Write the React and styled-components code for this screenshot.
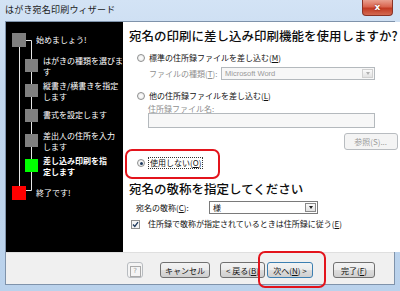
import React from 'react'
import styled, { createGlobalStyle, css } from 'styled-components'

const Global = createGlobalStyle`
  html, body { margin: 0; padding: 0; }
  body {
    width: 400px;
    height: 291px;
    overflow: hidden;
    font-family: "Noto Sans CJK JP", "Noto Sans", sans-serif;
  }
`

const Window = styled.div`
  width: 400px;
  height: 291px;
  box-sizing: border-box;
  padding: 0 5px 6px;
  display: flex;
  flex-direction: column;
  background: linear-gradient(180deg, #d3e3f5 0%, #c2d7ee 30%, #bad2ec 100%);
`

const TitleBar = styled.div`
  height: 21px;
  display: flex;
  justify-content: space-between;
  align-items: flex-start;
`

const Title = styled.div`
  font-size: 9px;
  line-height: 20px;
  color: #1b1b1b;
  letter-spacing: 0.2px;
`

const CloseButton = styled.div`
  width: 31px;
  height: 16px;
  margin-right: 2px;
  box-sizing: border-box;
  border: 1px solid #8a3326;
  border-top: none;
  border-radius: 0 0 4px 4px;
  background: linear-gradient(180deg, #e9a08f 0%, #d9654f 45%, #c23a22 55%, #d36a52 100%);
  color: #fff;
  font-family: "DejaVu Sans", sans-serif;
  font-weight: bold;
  font-size: 9px;
  line-height: 15px;
  text-align: center;
  text-shadow: 0 0 2px #6b1a0e;
`

const Client = styled.div`
  flex: 1;
  display: flex;
  flex-direction: column;
  border: 1px solid #7f93ab;
  background: #f0f0f0;
`

const Main = styled.div`
  height: 230px;
  display: flex;
`

const Sidebar = styled.div`
  position: relative;
  width: 119px;
  background: #000;
  box-sizing: border-box;
  padding-top: 11px;
  display: flex;
  flex-direction: column;
  gap: 11px;
`

const Tree = styled.svg`
  position: absolute;
  left: 0;
  top: 0;
  pointer-events: none;
`

const StepRow = styled.div`
  position: relative;
  height: 14px;
  display: flex;
  align-items: center;
  margin-top: ${p => p.$push || 0}px;
`

const Square = styled.div`
  flex: none;
  width: ${p => (p.$sub ? 13 : 14)}px;
  height: ${p => (p.$sub ? 13 : 14)}px;
  margin-left: ${p => (p.$sub ? 19 : 6)}px;
  background: ${p => p.$color};
`

const StepLabel = styled.div`
  margin-left: ${p => (p.$sub ? 5 : 10)}px;
  margin-top: ${p => (p.$two ? 3 : 0)}px;
  color: #fff;
  font-size: 8px;
  line-height: 10.5px;
  white-space: nowrap;
  font-weight: ${p => (p.$active ? 700 : 400)};
`

const Content = styled.div`
  flex: 1;
  background: #fff;
  padding: 6px 17px 0 6px;
  display: flex;
  flex-direction: column;
  font-size: 8px;
  color: #111;
`

const Heading = styled.div`
  font-size: 12.5px;
  line-height: 15px;
  font-weight: 500;
  color: #0d0d0d;
  white-space: nowrap;
  margin-top: ${p => p.$top || 0}px;
`

const OptionRow = styled.div`
  position: relative;
  height: 10px;
  display: flex;
  align-items: center;
  gap: 4px;
  padding-left: ${p => p.$indent || 8}px;
  margin-top: ${p => p.$top || 0}px;
  white-space: nowrap;
  line-height: 10px;
`

const Radio = styled.span`
  flex: none;
  width: 8px;
  height: 8px;
  box-sizing: border-box;
  border-radius: 50%;
  border: 1px solid #8e8f8f;
  background: radial-gradient(circle, #fff 0%, #e6e6e6 100%);
  display: flex;
  align-items: center;
  justify-content: center;
  &::after {
    content: '';
    width: 3px;
    height: 3px;
    border-radius: 50%;
    background: ${p => (p.$checked ? '#1e3a5e' : 'transparent')};
  }
`

const Check = styled.span`
  flex: none;
  width: 9px;
  height: 9px;
  box-sizing: border-box;
  border: 1px solid #8e8f8f;
  background: #f4f4f4;
  display: flex;
  align-items: center;
  justify-content: center;
`

const Focus = styled.span`
  outline: 1px dotted #333;
  outline-offset: 0;
  padding: 0 1px;
`

const FieldRow = styled.div`
  display: flex;
  align-items: center;
  padding-left: ${p => p.$indent}px;
  margin-top: ${p => p.$top || 0}px;
  white-space: nowrap;
`

const FieldLabel = styled.span`
  width: ${p => p.$width}px;
  flex: none;
  color: ${p => (p.$dim ? '#8f8f8f' : '#111')};
  line-height: 9px;
`

const Combo = styled.div`
  width: ${p => p.$width}px;
  height: ${p => p.$height || 13}px;
  box-sizing: border-box;
  border: 1px solid ${p => (p.$disabled ? '#b4b9bd' : '#7a7a7a')};
  background: ${p => (p.$disabled ? '#f7f7f7' : '#fff')};
  display: flex;
  align-items: center;
  padding-left: 3px;
  color: ${p => (p.$disabled ? '#9a9a9a' : '#111')};
  font-family: ${p => (p.$latin ? '"Liberation Sans", Arial, sans-serif' : 'inherit')};
  font-size: ${p => (p.$latin ? 7.5 : 8)}px;
`

const ComboArrow = styled.span`
  margin-left: auto;
  margin-right: 1px;
  width: 11px;
  height: 9px;
  box-sizing: border-box;
  border: 1px solid ${p => (p.$disabled ? '#d0d0d0' : '#8a8a8a')};
  background: linear-gradient(#fafafa, #e2e2e2);
  display: flex;
  align-items: center;
  justify-content: center;
  &::after {
    content: '';
    border-left: 2.5px solid transparent;
    border-right: 2.5px solid transparent;
    border-top: 3px solid ${p => (p.$disabled ? '#b0b0b0' : '#222')};
  }
`

const TextBox = styled.div`
  margin: 0 0 0 19px;
  width: 227px;
  height: 15px;
  box-sizing: border-box;
  border: 1px solid #b4b9bd;
  background: #f7f7f7;
`

const BrowseRow = styled.div`
  display: flex;
  justify-content: flex-end;
  margin-top: 5px;
`

const WinButton = styled.button`
  flex: none;
  width: ${p => p.$width}px;
  height: ${p => p.$height || 16}px;
  margin-left: ${p => p.$gap || 0}px;
  padding: 0;
  box-sizing: border-box;
  border: 1px solid ${p => (p.$disabled ? '#b8bcc0' : '#707070')};
  border-radius: 3px;
  background: ${p =>
    p.$disabled ? '#f4f4f4' : 'linear-gradient(180deg, #f3f3f3 0%, #ebebeb 50%, #dddddd 51%, #cfcfcf 100%)'};
  font-family: "Noto Sans CJK JP", sans-serif;
  font-size: 8px;
  color: ${p => (p.$disabled ? '#9b9b9b' : '#111')};
  position: relative;
  white-space: nowrap;
  ${p =>
    p.$focus &&
    css`
      border-color: #3c7fb1;
    `}
`

const Highlight = styled.div`
  position: absolute;
  left: ${p => p.$x}px;
  top: ${p => p.$y}px;
  width: ${p => p.$w}px;
  height: ${p => p.$h}px;
  box-sizing: border-box;
  border: 2px solid #e3141c;
  border-radius: 7px;
  pointer-events: none;
  z-index: 2;
`

const ButtonBar = styled.div`
  flex: 1;
  display: flex;
  align-items: flex-start;
  padding-top: 9px;
  padding-left: 121px;
  background: #f0f0f0;
  border-top: 1px solid #dfdfdf;
`

const HelpGlyph = styled.span`
  display: inline-block;
  width: 9px;
  height: 9px;
  border: 1px solid #a9a9a9;
  font-family: "DejaVu Sans", sans-serif;
  font-size: 7px;
  line-height: 9px;
  color: #9b9b9b;
`

const u = ch => <span style={{ textDecoration: 'underline' }}>{ch}</span>

const steps = [
  { label: ['始めましょう!'], color: '#808080' },
  { label: ['はがきの種類を選びま', 'す'], color: '#808080', sub: true },
  { label: ['縦書き/横書きを指定', 'します'], color: '#808080', sub: true },
  { label: ['書式を設定します'], color: '#808080', sub: true },
  { label: ['差出人の住所を入力', 'します'], color: '#808080', sub: true },
  { label: ['差し込み印刷を指', '定します'], color: '#00ff00', sub: true, active: true },
  { label: ['終了です!'], color: '#ff0000', push: 3 },
]

export default function App() {
  return (
    <>
      <Global />
      <Window>
        <TitleBar>
          <Title>はがき宛名印刷ウィザード</Title>
          <CloseButton>x</CloseButton>
        </TitleBar>
        <Client>
          <Main>
            <Sidebar>
              <Tree width="119" height="230">
                <g stroke="#e6e6e6" strokeWidth="1" fill="none">
                  <path d="M13.5 25 V165" />
                  <path d="M20 18.5 H25.5 V168.5 H20" />
                </g>
              </Tree>
              {steps.map((s, i) => (
                <StepRow key={i} $push={s.push}>
                  <Square $sub={s.sub} $color={s.color} />
                  <StepLabel $sub={s.sub} $active={s.active} $two={s.label.length > 1}>
                    {s.label[0]}
                    {s.label[1] && (
                      <>
                        <br />
                        {s.label[1]}
                      </>
                    )}
                  </StepLabel>
                </StepRow>
              ))}
            </Sidebar>
            <Content>
              <Heading>宛名の印刷に差し込み印刷機能を使用しますか?</Heading>

              <OptionRow $top={10}>
                <Radio />
                <span>標準の住所録ファイルを差し込む({u('M')})</span>
              </OptionRow>
              <FieldRow $indent={20} $top={4}>
                <FieldLabel $width={72} $dim>
                  ファイルの種類({u('T')}):
                </FieldLabel>
                <Combo $width={154} $disabled $latin>
                  Microsoft Word
                  <ComboArrow $disabled />
                </Combo>
              </FieldRow>

              <OptionRow $top={11}>
                <Radio />
                <span>他の住所録ファイルを差し込む({u('L')})</span>
              </OptionRow>
              <FieldRow $indent={19} $top={3}>
                <FieldLabel $width={80} $dim>
                  住所録ファイル名:
                </FieldLabel>
              </FieldRow>
              <TextBox />
              <BrowseRow>
                <WinButton $width={54} $height={17} $disabled>
                  参照(S)...
                </WinButton>
              </BrowseRow>

              <OptionRow $top={8}>
                <Highlight $x={-4} $y={-9} $w={95} $h={30} />
                <Radio $checked />
                <Focus>使用しない({u('O')})</Focus>
              </OptionRow>

              <Heading $top={13}>宛名の敬称を指定してください</Heading>
              <FieldRow $indent={7} $top={5}>
                <FieldLabel $width={73}>宛名の敬称({u('C')}):</FieldLabel>
                <Combo $width={109}>
                  様
                  <ComboArrow />
                </Combo>
              </FieldRow>
              <OptionRow $indent={2} $top={5}>
                <Check>
                  <svg width="7" height="7" viewBox="0 0 7 7">
                    <path d="M1 3.5 L2.8 5.5 L6 1.2" stroke="#1e3a5e" strokeWidth="1.3" fill="none" />
                  </svg>
                </Check>
                <span style={{ marginLeft: 4 }}>
                  住所録で敬称が指定されているときは住所録に従う({u('E')})
                </span>
              </OptionRow>
            </Content>
          </Main>
          <ButtonBar>
            <WinButton $width={16} $disabled>
              <HelpGlyph>?</HelpGlyph>
            </WinButton>
            <WinButton $width={50} $gap={17}>
              キャンセル
            </WinButton>
            <WinButton $width={45} $gap={10}>
              &lt; 戻る({u('B')})
            </WinButton>
            <WinButton $width={46} $gap={2} $focus>
              <Highlight $x={-10} $y={-12} $w={68} $h={37} />
              次へ({u('N')}) &gt;
            </WinButton>
            <WinButton $width={42} $gap={20}>
              完了({u('F')})
            </WinButton>
          </ButtonBar>
        </Client>
      </Window>
    </>
  )
}
